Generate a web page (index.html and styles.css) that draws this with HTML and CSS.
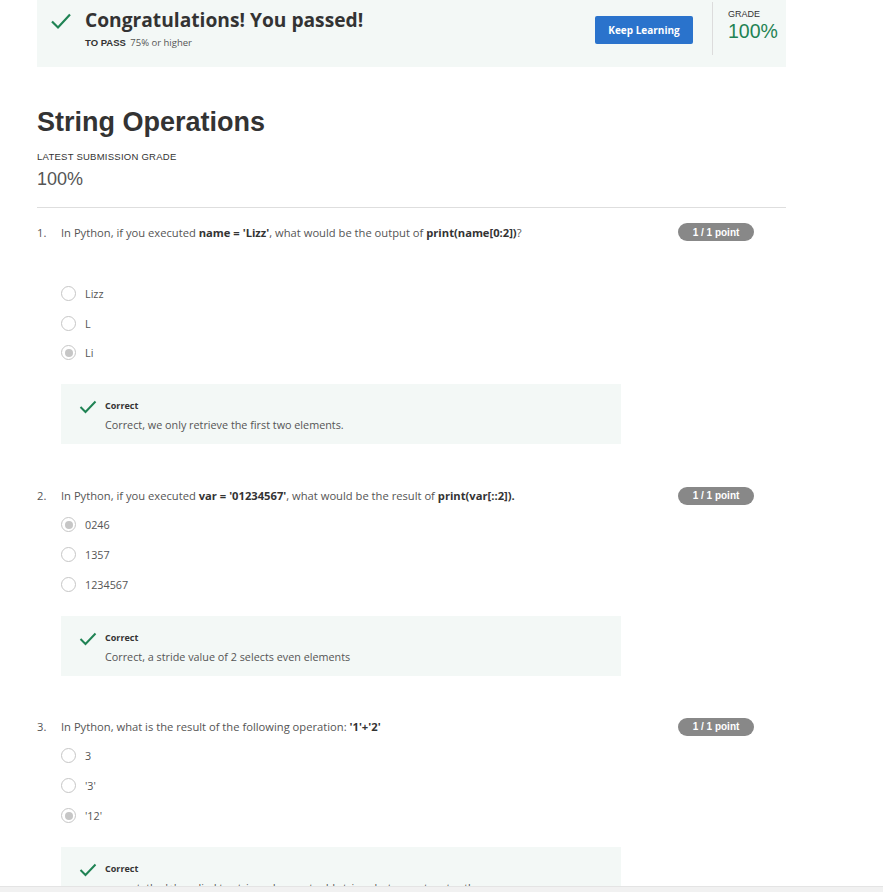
FILE: index.html
```html
<!DOCTYPE html>
<html>
<head>
<meta charset="utf-8">
<link rel="stylesheet" href="styles.css">
</head>
<body>
<div class="page">
  <div class="banner">
    <div class="banner-left">
      <svg class="banner-check" width="22" height="18" viewBox="0 0 22 18"><path d="M2 9.5 L8 15.5 L20 2.5" fill="none" stroke="#1f8354" stroke-width="2.2"/></svg>
      <div class="banner-text">
        <div class="banner-title">Congratulations! You passed!</div>
        <div class="banner-sub"><span class="topass">TO PASS</span> 75% or higher</div>
      </div>
    </div>
    <button class="keep">Keep Learning</button>
    <div class="divider"></div>
    <div class="grade">
      <div class="grade-label">GRADE</div>
      <div class="grade-value">100%</div>
    </div>
  </div>

  <h1 class="title">String Operations</h1>
  <div class="latest-label">LATEST SUBMISSION GRADE</div>
  <div class="latest-value">100%</div>
  <hr class="rule">

  <div class="question q1">
    <div class="q-head">
      <span class="q-num">1.</span>
      <span class="q-text">In Python, if you executed <b>name = 'Lizz'</b>, what would be the output of <b>print(name[0:2])</b>?</span>
      <span class="badge">1 / 1 point</span>
    </div>
    <div class="options first-gap">
      <div class="opt"><span class="radio"></span>Lizz</div>
      <div class="opt"><span class="radio"></span>L</div>
      <div class="opt"><span class="radio checked"></span>Li</div>
    </div>
    <div class="feedback">
      <svg class="fb-check" width="18" height="14" viewBox="0 0 18 14"><path d="M1.5 7 L6.5 12 L16.5 1.5" fill="none" stroke="#1f8354" stroke-width="2"/></svg>
      <div>
        <div class="fb-title">Correct</div>
        <div class="fb-text">Correct, we only retrieve the first two elements.</div>
      </div>
    </div>
  </div>

  <div class="question q2">
    <div class="q-head">
      <span class="q-num">2.</span>
      <span class="q-text">In Python, if you executed <b>var = '01234567'</b>, what would be the result of <b>print(var[::2]).</b></span>
      <span class="badge">1 / 1 point</span>
    </div>
    <div class="options">
      <div class="opt"><span class="radio checked"></span>0246</div>
      <div class="opt"><span class="radio"></span>1357</div>
      <div class="opt"><span class="radio"></span>1234567</div>
    </div>
    <div class="feedback">
      <svg class="fb-check" width="18" height="14" viewBox="0 0 18 14"><path d="M1.5 7 L6.5 12 L16.5 1.5" fill="none" stroke="#1f8354" stroke-width="2"/></svg>
      <div>
        <div class="fb-title">Correct</div>
        <div class="fb-text">Correct, a stride value of 2 selects even elements</div>
      </div>
    </div>
  </div>

  <div class="question q3">
    <div class="q-head">
      <span class="q-num">3.</span>
      <span class="q-text">In Python, what is the result of the following operation: <b>'1'+'2'</b></span>
      <span class="badge">1 / 1 point</span>
    </div>
    <div class="options">
      <div class="opt"><span class="radio"></span>3</div>
      <div class="opt"><span class="radio"></span>'3'</div>
      <div class="opt"><span class="radio checked"></span>'12'</div>
    </div>
    <div class="feedback">
      <svg class="fb-check" width="18" height="14" viewBox="0 0 18 14"><path d="M1.5 7 L6.5 12 L16.5 1.5" fill="none" stroke="#1f8354" stroke-width="2"/></svg>
      <div>
        <div class="fb-title">Correct</div>
        <div class="fb-text">correct, the '+' applied to strings does not add strings but concatenates them</div>
      </div>
    </div>
  </div>
</div>
<div class="hscroll"></div>
</body>
</html>
```

FILE: styles.css
```css
html, body {
  margin: 0;
  padding: 0;
  background: #fff;
}
body {
  font-family: "Open Sans", "Liberation Sans", sans-serif;
  color: #555;
  overflow: hidden;
  height: 892px;
}
.page {
  margin-left: 37px;
  width: 749px;
}
.banner {
  height: 67px;
  background: #f3f8f6;
  display: flex;
  align-items: flex-start;
}
.banner-left {
  flex: 1;
  display: flex;
  align-items: flex-start;
  padding-left: 13px;
  padding-top: 12px;
}
.banner-check {
  flex: none;
}
.banner-text {
  margin-left: 13px;
}
.banner-title {
  font-size: 19.2px;
  font-weight: 700;
  color: #333;
  line-height: 20px;
  margin-top: -2px;
}
.banner-sub {
  font-size: 9.5px;
  color: #555;
  margin-top: 7px;
  line-height: 12px;
}
.topass {
  font-family: "Liberation Sans", Arial, sans-serif;
  font-weight: 700;
  color: #333;
  margin-right: 2px;
}
.keep {
  margin-top: 16px;
  width: 98px;
  height: 28px;
  border: none;
  border-radius: 2px;
  background: #2a73cc;
  color: #fff;
  font-family: "Open Sans", sans-serif;
  font-weight: 700;
  font-size: 10px;
  padding: 0;
}
.divider {
  width: 1px;
  height: 53px;
  background: #dcdcdc;
  margin: 2px 15px 0 19px;
}
.grade {
  width: 58px;
  padding-top: 9px;
}
.grade-label {
  font-family: "Liberation Sans", Arial, sans-serif;
  font-size: 9px;
  color: #333;
  line-height: 11px;
}
.grade-value {
  font-family: "Liberation Sans", Arial, sans-serif;
  font-size: 19.5px;
  color: #1f8354;
  line-height: 22px;
}
.title {
  font-family: "Liberation Sans", Arial, sans-serif;
  font-size: 27px;
  font-weight: 700;
  color: #333;
  margin: 39px 0 0 0;
  line-height: 32px;
}
.latest-label {
  font-family: "Liberation Sans", Arial, sans-serif;
  font-size: 9.5px;
  letter-spacing: 0.25px;
  color: #333;
  margin-top: 13px;
  line-height: 11px;
}
.latest-value {
  font-family: "Liberation Sans", Arial, sans-serif;
  font-size: 18px;
  color: #555;
  margin-top: 6px;
  line-height: 22px;
}
.rule {
  border: none;
  border-top: 1px solid #dedede;
  margin: 17px 0 0 0;
}
.q-head {
  display: flex;
  align-items: center;
  height: 18px;
  font-size: 11.2px;
}
.q1 .q-head { margin-top: 15px; }
.q2 .q-head { margin-top: 43px; }
.q3 .q-head { margin-top: 42px; }
.q-num {
  width: 24px;
  flex: none;
}
.q-text {
  flex: 1;
}
.q-text b {
  color: #333;
}
.badge {
  flex: none;
  width: 76px;
  height: 18px;
  margin-right: 32px;
  border-radius: 9px;
  background: #888;
  color: #fff;
  font-family: "Liberation Sans", Arial, sans-serif;
  font-weight: 700;
  font-size: 10px;
  display: flex;
  align-items: center;
  justify-content: center;
}
.options {
  margin-left: 24px;
  margin-top: 5px;
}
.options.first-gap {
  margin-top: 38px;
}
.opt {
  display: flex;
  align-items: center;
  height: 29.5px;
  font-size: 10.8px;
  color: #555;
}
.q2 .opt, .q3 .opt {
  height: 30px;
}
.radio {
  width: 13px;
  height: 13px;
  border: 1.5px solid #c6c6c6;
  border-radius: 50%;
  margin-right: 9px;
  display: inline-flex;
  align-items: center;
  justify-content: center;
  box-sizing: content-box;
}
.radio.checked::after {
  content: "";
  width: 8px;
  height: 8px;
  border-radius: 50%;
  background: #c6c6c6;
}
.feedback {
  margin-left: 24px;
  margin-top: 16px;
  width: 560px;
  height: 60px;
  background: #f3f8f6;
  display: flex;
  align-items: flex-start;
  box-sizing: border-box;
  padding: 16px 0 0 18px;
}
.fb-check {
  flex: none;
  margin-right: 8px;
}
.fb-title {
  font-size: 9px;
  font-weight: 700;
  color: #333;
  line-height: 12px;
}
.fb-text {
  font-size: 10.8px;
  color: #555;
  margin-top: 6px;
  line-height: 14px;
}
.hscroll {
  position: fixed;
  left: 0;
  right: 0;
  bottom: 0;
  height: 5px;
  background: #f1f1f1;
  border-top: 1px solid #e4e4e4;
}
```
